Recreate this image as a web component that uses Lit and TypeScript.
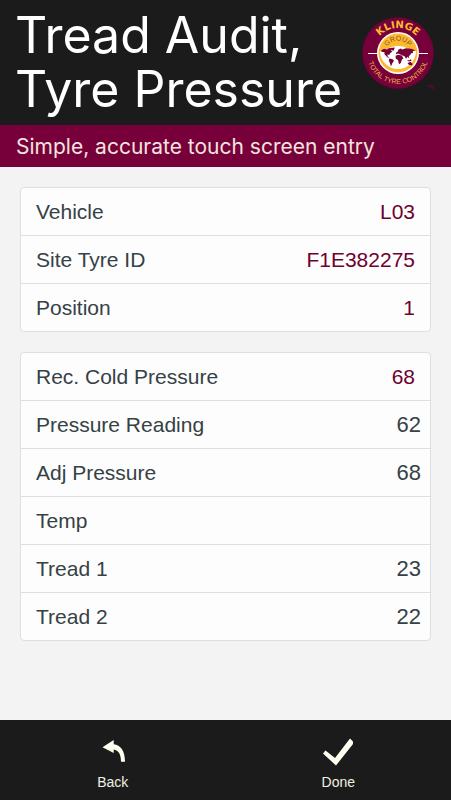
import { LitElement, html, css, svg } from "lit";
import { customElement } from "lit/decorators.js";

interface Field {
  id: string;
  label: string;
  value: string;
  editable?: boolean;
}

const vehicleFields: Field[] = [
  { id: "vehicle", label: "Vehicle", value: "L03" },
  { id: "tyre-id", label: "Site Tyre ID", value: "F1E382275" },
  { id: "position", label: "Position", value: "1" },
];

const readingFields: Field[] = [
  { id: "cold", label: "Rec. Cold Pressure", value: "68" },
  { id: "reading", label: "Pressure Reading", value: "62", editable: true },
  { id: "adjusted", label: "Adj Pressure", value: "68", editable: true },
  { id: "temp", label: "Temp", value: "", editable: true },
  { id: "tread-1", label: "Tread 1", value: "23", editable: true },
  { id: "tread-2", label: "Tread 2", value: "22", editable: true },
];

@customElement("klinge-logo")
export class KlingeLogo extends LitElement {
  static styles = css`
    :host {
      display: block;
    }
    .logo {
      display: block;
      width: 74px;
      height: 74px;
      font-family: "Liberation Sans", Arial, sans-serif;
    }
    .brand {
      font-family: "DejaVu Sans", sans-serif;
      font-size: 10px;
      font-weight: 700;
      fill: #fdb92e;
    }
    .group {
      font-size: 7px;
      fill: #86502c;
    }
    .motto {
      font-size: 7px;
      fill: #f0b048;
    }
    .mark {
      font-size: 5px;
      fill: #6d0a3c;
    }
  `;

  render() {
    return html`<svg class="logo" viewBox="-1 0 74 74" role="img" aria-label="Klinge Group">
      ${svg`
      <defs>
        <path id="brand-arc" d="M11 36 A25 25 0 0 1 61 36" />
        <path id="group-arc" d="M23.5 38 V36 A12.5 12.5 0 0 1 48.5 36 V38" />
        <path id="motto-arc" d="M5 36 A31 31 0 0 0 67 36" />
      </defs>
      <circle cx="36" cy="36" r="35.3" fill="#78003a" />
      <circle cx="36" cy="36" r="35.3" fill="none" stroke="#78003a" stroke-width="1" stroke-dasharray="3 1.5" />
      <path d="M6 36.5H66" stroke="#fff" stroke-width="1" />
      <circle cx="36" cy="36" r="21" fill="#fff" />
      <circle cx="36" cy="36" r="19.4" fill="#fdb92e" />
      <path d="M18 34 C24 34.5 27 29 36 29 C45 29 48 34.5 54 34 A18 18 0 1 1 18 34Z" fill="#fff" />
      <g fill="#78003a">
        <path d="M19 33.5L22 31.8L25 32.4L27 31L30.5 31.4L29 33.6L30.4 34.6L28.3 36L27.2 38L25.4 37.6L25.8 39.6L27.8 40.8L25.6 40.4L22.5 37.3L22.4 35L19.8 35Z" />
        <path d="M28.2 31L32.8 30.6L31.6 33.8L30 33.2Z" />
        <path d="M27.4 41.4L30.6 42.2L32 43.8L30.3 46.2L29 49.5L28 46.2L26.8 43.6Z" />
        <path d="M33.6 38.8L36.3 37.8L39.8 38.6L41.4 41.2L39.8 42.7L38.8 46L37 47.3L36 43L33.8 41.7Z" />
        <path d="M34 37.2L34.2 35.5L36.2 34.2L36 33L38.4 31.4L40.4 32.6L44 31.2L49 31.8L53.4 33.2L50.8 34.3L51 36L49.2 36.2L48 38.2L46.8 39L47.3 41.4L45.6 39.8L44 41.8L42.5 39.2L40 38.2L37.8 37.3L36.4 36.4Z" />
        <path d="M45 43L47.4 43.3L49 42.3L49.5 43.8L47 44.4Z" />
        <path d="M45.5 46L48.6 44.8L50.6 47L49.8 48.4L46.8 47.7Z" />
      </g>
      <text class="brand" text-anchor="middle"><textPath href="#brand-arc" startOffset="50%">KLINGE</textPath></text>
      <text class="group" text-anchor="middle"><textPath href="#group-arc" startOffset="50%">GROUP</textPath></text>
      <text class="motto" text-anchor="middle"><textPath href="#motto-arc" startOffset="50%">TOTAL TYRE CONTROL</textPath></text>
      <text class="mark" x="65" y="72">TM</text>
      `}
    </svg>`;
  }
}

@customElement("app-root")
export class AppRoot extends LitElement {
  static styles = css`
    :host {
      display: flex;
      flex-direction: column;
      min-height: 100vh;
      background: #f3f3f3;
      color: #364146;
      font-family: "Liberation Sans", Arial, sans-serif;
    }
    * {
      box-sizing: border-box;
    }
    .header {
      display: flex;
      justify-content: space-between;
      align-items: flex-start;
      background: #1b1b1b;
      color: #fff;
      padding: 8px 16px 9px 15px;
    }
    .title {
      margin: 0;
      font: 400 50px/54px Inter, sans-serif;
      white-space: nowrap;
    }
    .logo {
      flex: none;
      margin-top: 9px;
      width: 74px;
    }
    .banner {
      margin: 0;
      padding: 2px 16px 0;
      background: #78003a;
      color: #f3e4df;
      font: 400 21px/40px Inter, sans-serif;
      white-space: nowrap;
    }
    .form {
      display: flex;
      flex-direction: column;
      flex: 1;
      gap: 20px;
      padding: 20px;
    }
    .card {
      background: #fdfdfd;
      border: 1px solid #dedede;
      border-radius: 4px;
      overflow: hidden;
    }
    .row {
      display: flex;
      align-items: center;
      height: 48px;
      padding: 1px 0 0 15px;
      border-bottom: 1px solid #dedede;
      font-size: 21px;
      line-height: 24px;
    }
    .row:last-child {
      height: 47px;
      border-bottom: 0;
    }
    .label {
      flex: none;
    }
    .value {
      flex: 1;
      padding-right: 15px;
      text-align: right;
      color: #6f0030;
    }
    .entry {
      flex: 1;
      min-width: 0;
      height: 44px;
      padding: 0 9px 0 0;
      border: 0;
      outline: 0;
      background: transparent;
      color: inherit;
      font: inherit;
      font-size: 22px;
      text-align: right;
    }
    .footer {
      display: grid;
      grid-template-columns: 1fr 1fr;
      background: #1b1b1b;
    }
    .action {
      display: flex;
      flex-direction: column;
      align-items: center;
      gap: 6px;
      padding: 16px 0 9px;
      border: 0;
      background: transparent;
      color: #f0f0e2;
      font: 14px/17px "Liberation Sans", Arial, sans-serif;
      cursor: pointer;
    }
    .icon {
      display: block;
      width: 32px;
      height: 32px;
      fill: #fffff0;
    }
  `;

  private renderField(field: Field) {
    return html`<div class="row">
      <label class="label" for=${field.id}>${field.label}</label>
      ${field.editable
        ? html`<input class="entry" id=${field.id} inputmode="numeric" .value=${field.value} />`
        : html`<output class="value" id=${field.id}>${field.value}</output>`}
    </div>`;
  }

  render() {
    return html`
      <header class="header">
        <h1 class="title">Tread Audit,<br />Tyre Pressure</h1>
        <klinge-logo class="logo"></klinge-logo>
      </header>
      <p class="banner">Simple, accurate touch screen entry</p>
      <main class="form">
        <section class="card">${vehicleFields.map((f) => this.renderField(f))}</section>
        <section class="card">${readingFields.map((f) => this.renderField(f))}</section>
      </main>
      <footer class="footer">
        <button class="action" type="button">
          <svg class="icon" viewBox="0 0 32 32" aria-hidden="true">
            <path d="M5.5 11.2L16.7 4V8.2C23.5 9 28 14.5 28 25.8H24C24 18 21.5 14.2 16.7 13.4V17Z" />
          </svg>
          Back
        </button>
        <button class="action" type="button">
          <svg class="icon" viewBox="0 0 32 32" aria-hidden="true">
            <path d="M1 17.5L3.5 14.5L13 22L28 2.5L31 5.5V8L14 29.5Z" />
          </svg>
          Done
        </button>
      </footer>
    `;
  }
}
